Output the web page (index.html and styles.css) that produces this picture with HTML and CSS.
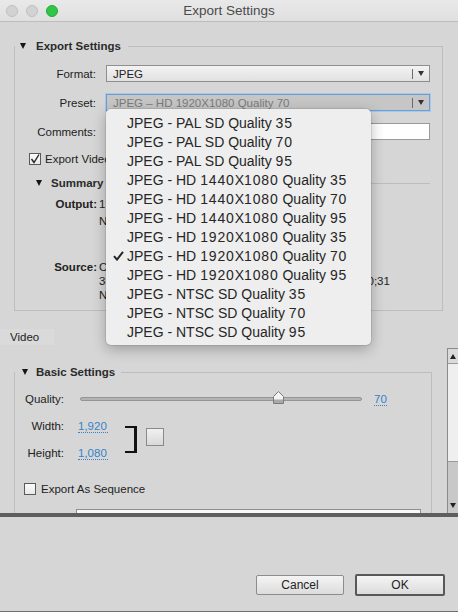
FILE: index.html
```html
<!DOCTYPE html>
<html>
<head>
<meta charset="utf-8">
<title>Export Settings</title>
<link rel="stylesheet" href="styles.css">
</head>
<body>
<header class="titlebar">
  <div class="lights"><span class="light"></span><span class="light"></span><span class="light green"></span></div>
  <div class="title">Export Settings</div>
  <div></div>
</header>

<section class="top">
  <div class="group export-group">
    <div class="group-head"><span class="tri"></span><span class="group-title">Export Settings</span><span class="rule"></span></div>
    <div class="form">
      <span class="lbl">Format:</span>
      <div class="select"><span class="sel-text">JPEG</span><span class="sel-div"></span><span class="sel-arrow"></span></div>
      <span class="lbl">Preset:</span>
      <div class="select focused"><span class="sel-text">JPEG – HD 1920X1080 Quality 70</span><span class="sel-div"></span><span class="sel-arrow"></span></div>
      <span class="lbl">Comments:</span>
      <div class="textfield"></div>
    </div>
    <div class="check-row video-check">
      <span class="checkbox"><svg width="10" height="10" viewBox="0 0 10 10"><path d="M1.5 5 L4 8.5 L9 0.5" fill="none" stroke="#222" stroke-width="1.4"/></svg></span>
      <span>Export Video</span>
    </div>
    <div class="sub-head"><span class="tri"></span><span class="group-title">Summary</span><span class="rule"></span></div>
    <div class="summary">
      <span class="sum-key">Output:</span>
      <div class="sum-val out"><div>1920x1080 (1.0), 29.97 fps</div><div>No Audio</div></div>
      <span class="sum-key src">Source:</span>
      <div class="sum-val src"><div>Clip, Sequence 01</div><div>3840x2160 (1.0000), 29.97 fps, Progressive, 00;00;10;31</div><div>No Audio</div></div>
    </div>
  </div>
</section>

<div class="tabs"><span class="tab">Video</span></div>

<section class="video-panel">
  <div class="video-content">
    <div class="group basic-group">
      <div class="group-head"><span class="tri"></span><span class="group-title">Basic Settings</span><span class="rule"></span></div>
      <div class="quality-row">
        <span class="q-lbl">Quality:</span>
        <div class="slider">
          <svg class="thumb" width="11" height="13" viewBox="0 0 11 13"><path d="M0.5 5.5 L5.5 0.5 L10.5 5.5 L10.5 12.5 L0.5 12.5 Z" fill="#f3f3f3" stroke="#7a7a7a"/><rect x="1" y="8.5" width="9" height="3.5" fill="#a9a9a9"/></svg>
        </div>
        <span class="link">70</span>
      </div>
      <div class="dims">
        <div class="dim-grid">
          <span class="d-lbl">Width:</span><span class="link">1,920</span>
          <span class="d-lbl">Height:</span><span class="link">1,080</span>
        </div>
        <span class="bracket"></span>
        <span class="square"></span>
      </div>
      <div class="check-row seq-check">
        <span class="checkbox"></span>
        <span>Export As Sequence</span>
      </div>
      <div class="seq-field"></div>
    </div>
  </div>
  <div class="scrollbar">
    <div class="sb-up"><span class="up-arrow"></span></div>
    <div class="sb-track"></div>
    <div class="sb-lower"><span class="down-arrow"></span></div>
  </div>
</section>

<div class="divider"></div>

<footer class="bottom">
  <button class="btn cancel">Cancel</button>
  <button class="btn ok">OK</button>
</footer>

<div class="menu">
  <div class="item"><span class="mark"></span>JPEG - PAL SD Quality <span class="num">35</span></div>
  <div class="item"><span class="mark"></span>JPEG - PAL SD Quality <span class="num">70</span></div>
  <div class="item"><span class="mark"></span>JPEG - PAL SD Quality <span class="num">95</span></div>
  <div class="item"><span class="mark"></span>JPEG - HD <span class="num">1440</span>X<span class="num">1080</span> Quality <span class="num">35</span></div>
  <div class="item"><span class="mark"></span>JPEG - HD <span class="num">1440</span>X<span class="num">1080</span> Quality <span class="num">70</span></div>
  <div class="item"><span class="mark"></span>JPEG - HD <span class="num">1440</span>X<span class="num">1080</span> Quality <span class="num">95</span></div>
  <div class="item"><span class="mark"></span>JPEG - HD <span class="num">1920</span>X<span class="num">1080</span> Quality <span class="num">35</span></div>
  <div class="item"><span class="mark"><svg width="11" height="10" viewBox="0 0 11 10"><path d="M1 5.2 L4 8.6 L10 0.8" fill="none" stroke="#262626" stroke-width="2"/></svg></span>JPEG - HD <span class="num">1920</span>X<span class="num">1080</span> Quality <span class="num">70</span></div>
  <div class="item"><span class="mark"></span>JPEG - HD <span class="num">1920</span>X<span class="num">1080</span> Quality <span class="num">95</span></div>
  <div class="item"><span class="mark"></span>JPEG - NTSC SD Quality <span class="num">35</span></div>
  <div class="item"><span class="mark"></span>JPEG - NTSC SD Quality <span class="num">70</span></div>
  <div class="item"><span class="mark"></span>JPEG - NTSC SD Quality <span class="num">95</span></div>
</div>
</body>
</html>
```
FILE: styles.css
```css
* { box-sizing: border-box; margin: 0; padding: 0; }
html, body { width: 458px; height: 612px; overflow: hidden; }
body {
  font-family: "Liberation Sans", Arial, sans-serif;
  font-size: 11.5px;
  color: #222;
  background: #d6d6d6;
  position: relative;
}

/* title bar */
.titlebar {
  height: 22px;
  border-bottom: 1px solid #bdbdbd;
  background: linear-gradient(#e9e9e9, #dfdfdf);
  display: grid;
  grid-template-columns: 1fr auto 1fr;
  align-items: center;
}
.lights { display: flex; gap: 8px; padding-left: 6px; }
.light {
  width: 12px; height: 12px; border-radius: 50%;
  background: #d2d2d2; border: 1px solid #c0c0c0;
}
.light.green { background: #2fc646; border-color: #25a83a; }
.title { font-size: 13.5px; color: #4b4b4b; }

/* groups */
.group {
  display: flex;
  flex-direction: column;
  border: 1px solid #bdbdbd;
  border-top: none;
}
.group-head, .sub-head {
  display: flex;
  align-items: center;
  height: 14px;
}
.group-head { margin-top: -7px; }
.tri {
  width: 0; height: 0;
  border-left: 3.5px solid transparent;
  border-right: 3.5px solid transparent;
  border-top: 6px solid #151515;
}
.group-title { font-weight: bold; color: #2b2b2b; }
.rule { flex: 1; height: 1px; background: #bdbdbd; }

/* export settings */
.top { padding: 24px 0 0 14px; }
.export-group { width: 429px; height: 265px; }
.export-group .group-head .tri { margin-left: 5px; margin-right: 10px; }
.export-group .group-head .rule { margin-left: 7px; }

.form {
  display: grid;
  grid-template-columns: 81px 1fr;
  column-gap: 10px;
  row-gap: 12px;
  margin-top: 12px;
  padding-right: 12px;
  align-items: center;
}
.lbl { text-align: right; }
.select {
  height: 17px;
  border: 1px solid #8e8e8e;
  background: linear-gradient(#f3f3f3, #e1e1e1);
  display: flex;
  align-items: center;
  padding-left: 6px;
}
.sel-text { flex: 1; white-space: nowrap; }
.sel-div { width: 1px; height: 10px; background: #6a6a6a; margin-right: 5px; }
.sel-arrow {
  width: 0; height: 0;
  border-left: 3px solid transparent;
  border-right: 3px solid transparent;
  border-top: 5px solid #333;
  margin-right: 5px;
}
.select.focused {
  background: #c6c6c6;
  border-color: #6a9fd6;
  box-shadow: 0 0 0 1px #a8c7ea;
  color: #7b7b7b;
}
.textfield { height: 17px; background: #fff; border: 1px solid #9a9a9a; }

.check-row { display: flex; align-items: center; height: 14px; }
.checkbox {
  width: 12px; height: 12px;
  border: 1px solid #5a5a5a;
  background: linear-gradient(#fbfbfb, #e9e9e9);
  display: flex; align-items: center; justify-content: center;
}
.video-check { margin-top: 12px; padding-left: 14px; gap: 4px; }

.sub-head { margin-top: 10px; padding-left: 21px; padding-right: 12px; }
.sub-head .tri { margin-right: 9px; }
.sub-head .rule { margin-left: 7px; }

.summary {
  display: grid;
  grid-template-columns: 82px 1fr;
  column-gap: 2px;
  line-height: 14px;
  margin-top: 7px;
  white-space: nowrap;
}
.sum-key { text-align: right; font-weight: bold; }
.sum-val.out div + div { margin-top: 3px; }
.sum-key.src, .sum-val.src { margin-top: 32px; }

/* tabs */
.tabs { margin-top: 18px; height: 16px; display: flex; }
.tab {
  width: 54px; height: 16px; line-height: 17px;
  padding-left: 10px;
  background: #dadada;
}

/* video panel */
.video-panel { height: 168px; display: flex; overflow: hidden; }
.video-content { flex: 1; padding: 27px 0 0 14px; }
.basic-group { width: 418px; height: 200px; }
.basic-group .group-head .tri { margin-left: 7px; margin-right: 8px; }
.basic-group .group-head .rule { margin-left: 6px; }

.quality-row { display: flex; align-items: center; height: 14px; margin-top: 13px; }
.q-lbl { width: 49px; text-align: right; }
.slider {
  position: relative;
  width: 282px; height: 4px;
  margin-left: 16px;
  background: #b4b4b4;
  border: 1px solid #959595;
  border-radius: 2px;
}
.thumb { position: absolute; left: 192px; top: -7px; }
.link {
  color: #3583c6;
  border-bottom: 1px dotted #3583c6;
  line-height: 12px;
}
.quality-row .link { margin-left: 12px; }

.dims { display: flex; align-items: flex-start; margin-top: 13px; }
.dim-grid {
  display: grid;
  grid-template-columns: 49px 30px;
  column-gap: 14px;
  row-gap: 13px;
  grid-auto-rows: 14px;
  align-items: center;
}
.d-lbl { text-align: right; }
.bracket {
  width: 12px; height: 27px;
  margin-left: 17px; margin-top: 7px;
  border-top: 2px solid #111;
  border-bottom: 2px solid #111;
  border-right: 3px solid #111;
}
.square {
  width: 18px; height: 18px;
  margin-left: 9px; margin-top: 9px;
  border: 1px solid #8a8a8a;
  background: linear-gradient(#f1f1f1, #d9d9d9);
}
.seq-check { margin-top: 22px; padding-left: 9px; gap: 5px; }
.seq-field {
  width: 345px; height: 20px;
  margin-left: 61px; margin-top: 13px;
  background: #f7f7f7;
  border: 1px solid #8f8f8f;
}

.scrollbar {
  width: 11px;
  margin-top: 3px;
  border-left: 1px solid #8a8a8a;
  border-top: 1px solid #8a8a8a;
  display: flex;
  flex-direction: column;
}
.sb-up {
  height: 15px;
  background: #dadada;
  border-bottom: 1px solid #9a9a9a;
  display: flex; align-items: center; justify-content: center;
}
.up-arrow {
  width: 0; height: 0;
  border-left: 3.5px solid transparent;
  border-right: 3.5px solid transparent;
  border-bottom: 5px solid #222;
}
.sb-track { height: 97px; background: #efefef; }
.sb-lower {
  flex: 1;
  background: #c8c8c8;
  border-top: 1px solid #9a9a9a;
  display: flex; align-items: flex-end; justify-content: center;
  padding-bottom: 5px;
}
.down-arrow {
  width: 0; height: 0;
  border-left: 3.5px solid transparent;
  border-right: 3.5px solid transparent;
  border-top: 5px solid #222;
}

.divider { height: 4px; background: #5e5e5e; }

.bottom {
  height: 95px;
  border-bottom: 1px solid #6e6e6e;
  display: flex;
  justify-content: flex-end;
  align-items: center;
  gap: 11px;
  padding: 57px 13px 15px 0;
}
.btn {
  font-family: "Liberation Sans", Arial, sans-serif;
  font-size: 12px;
  color: #222;
  background: linear-gradient(#f4f4f4, #dcdcdc);
  border-radius: 2px;
}
.cancel { width: 88px; height: 20px; border: 1px solid #8c8c8c; }
.ok { width: 90px; height: 22px; border: 2px solid #585858; }

/* popup menu */
.menu {
  position: absolute;
  left: 106px; top: 109px;
  width: 265px;
  padding: 4px 0;
  background: #eeeeee;
  border-radius: 5px;
  box-shadow: 0 4px 14px rgba(0,0,0,0.28), 0 0 0 1px rgba(0,0,0,0.08);
}
.item {
  display: flex;
  align-items: center;
  height: 19px;
  font-size: 14px;
  color: #262626;
  white-space: pre;
}
.num { letter-spacing: 0.85px; }
.mark { width: 21px; display: flex; align-items: center; padding-left: 7px; }
```
